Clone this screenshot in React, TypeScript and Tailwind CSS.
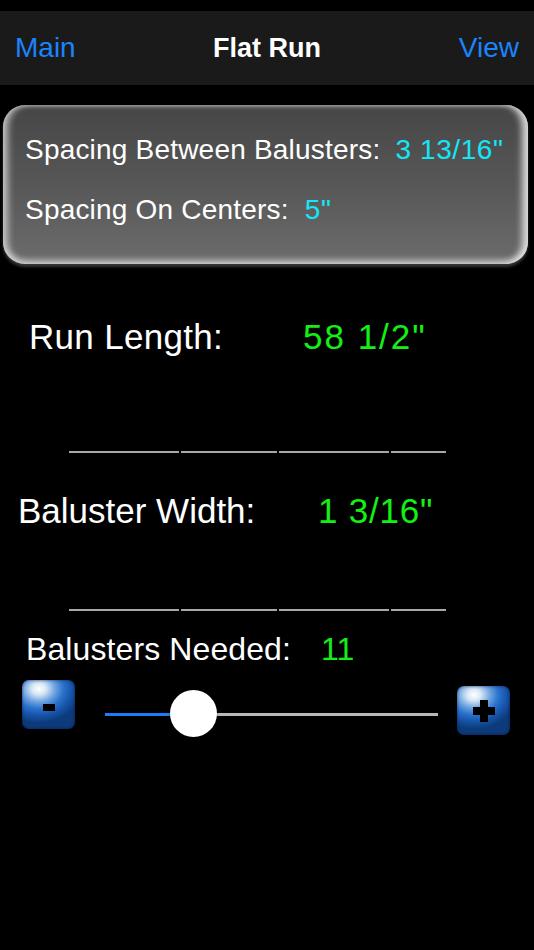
import React from "react";

function Segments() {
  return (
    <div className="flex ml-[69px] w-[377px] gap-[2px] h-[2px]">
      <div className="w-[110px] bg-[#a8a8a8]" />
      <div className="w-[96px] bg-[#a8a8a8]" />
      <div className="w-[110px] bg-[#a8a8a8]" />
      <div className="flex-1 bg-[#a8a8a8]" />
    </div>
  );
}

function BlueButton({ children, className }: { children: React.ReactNode; className: string }) {
  return (
    <div
      className={
        "relative w-[53px] h-[49px] rounded-[7px] flex items-center justify-center shadow-[inset_0_0_3px_rgba(0,20,60,0.7)] bg-[radial-gradient(ellipse_80%_70%_at_32%_18%,#ffffff_0%,#dbe8f6_16%,#6fa4e0_38%,#2a72cc_58%,#1654a8_78%,#0c3a7a_100%)] " +
        className
      }
    >
      {children}
    </div>
  );
}

export default function App() {
  return (
    <div
      className="w-[534px] h-[950px] bg-black text-white overflow-hidden"
      style={{ fontFamily: '"Liberation Sans", Arial, sans-serif' }}
    >
      <div className="h-[11px] bg-black" />
      <div className="h-[74px] bg-[#1a1a1a] flex items-center justify-between px-[15px] relative">
        <span className="text-[28px] text-[#1a84fc] leading-none">Main</span>
        <span className="absolute left-0 right-0 text-center text-[27px] font-bold leading-none pointer-events-none">Flat Run</span>
        <span className="text-[28px] text-[#1a84fc] leading-none">View</span>
      </div>

      <div className="mt-[20px] mx-[3px] w-[525px] h-[159px] rounded-[22px] bg-[linear-gradient(180deg,#464646_0%,#575757_50%,#6c6c6c_100%)] shadow-[inset_8px_0_7px_-3px_rgba(215,215,215,0.8),inset_-9px_0_7px_-3px_rgba(230,230,230,0.9),inset_0_-7px_6px_-3px_rgba(220,220,220,0.75),inset_0_3px_4px_-2px_rgba(190,190,190,0.6),0_3px_3px_rgba(60,60,60,0.9)] pl-[22px] pt-[28px]">
        <div className="flex items-center h-[34px] text-[28px] leading-[34px] tracking-[0.2px]">
          <span>Spacing Between Balusters:</span>
          <span className="ml-[15px] text-[#14e6f5] tracking-[0.6px]">3 13/16"</span>
        </div>
        <div className="flex items-center h-[34px] mt-[26px] text-[28px] leading-[34px] tracking-[0.2px]">
          <span>Spacing On Centers:</span>
          <span className="ml-[16px] text-[#14e6f5] tracking-[0.6px]">5"</span>
        </div>
      </div>

      <div className="mt-[51px] flex items-center h-[44px] text-[35px] leading-[44px]">
        <span className="ml-[29px] w-[274px] tracking-[0.3px]">Run Length:</span>
        <span className="text-[#14f014] tracking-[2px]">58 1/2"</span>
      </div>

      <div className="mt-[92px]">
        <Segments />
      </div>

      <div className="mt-[36px] flex items-center h-[44px] text-[35px] leading-[44px]">
        <span className="ml-[18px] w-[300px]">Baluster Width:</span>
        <span className="text-[#14f014] tracking-[0.8px]">1 3/16"</span>
      </div>

      <div className="mt-[76px]">
        <Segments />
      </div>

      <div className="mt-[20px] flex items-center h-[36px] text-[32px] leading-[36px]">
        <span className="ml-[26px] w-[295px] tracking-[0.1px]">Balusters Needed:</span>
        <span className="text-[#14f014]">11</span>
      </div>

      <div className="flex items-start">
        <BlueButton className="ml-[22px] mt-[13px]">
          <div className="w-[12px] h-[7px] bg-black mt-[6px]" />
        </BlueButton>
        <div className="relative ml-[30px] w-[333px] h-[2px] mt-[46px] flex">
          <div className="w-[80px] h-[3px] bg-[#1d7cf4]" />
          <div className="flex-1 h-[3px] bg-[#b8b8b8]" />
          <div className="absolute left-[65px] top-[-23px] w-[47px] h-[47px] rounded-full bg-white shadow-[0_2px_3px_rgba(0,0,0,0.4)]" />
        </div>
        <BlueButton className="ml-[19px] mt-[19px]">
          <div className="relative w-[22px] h-[22px]">
            <div className="absolute left-[7px] top-0 w-[8px] h-[22px] bg-black" />
            <div className="absolute left-0 top-[7px] w-[22px] h-[8px] bg-black" />
          </div>
        </BlueButton>
      </div>
    </div>
  );
}
